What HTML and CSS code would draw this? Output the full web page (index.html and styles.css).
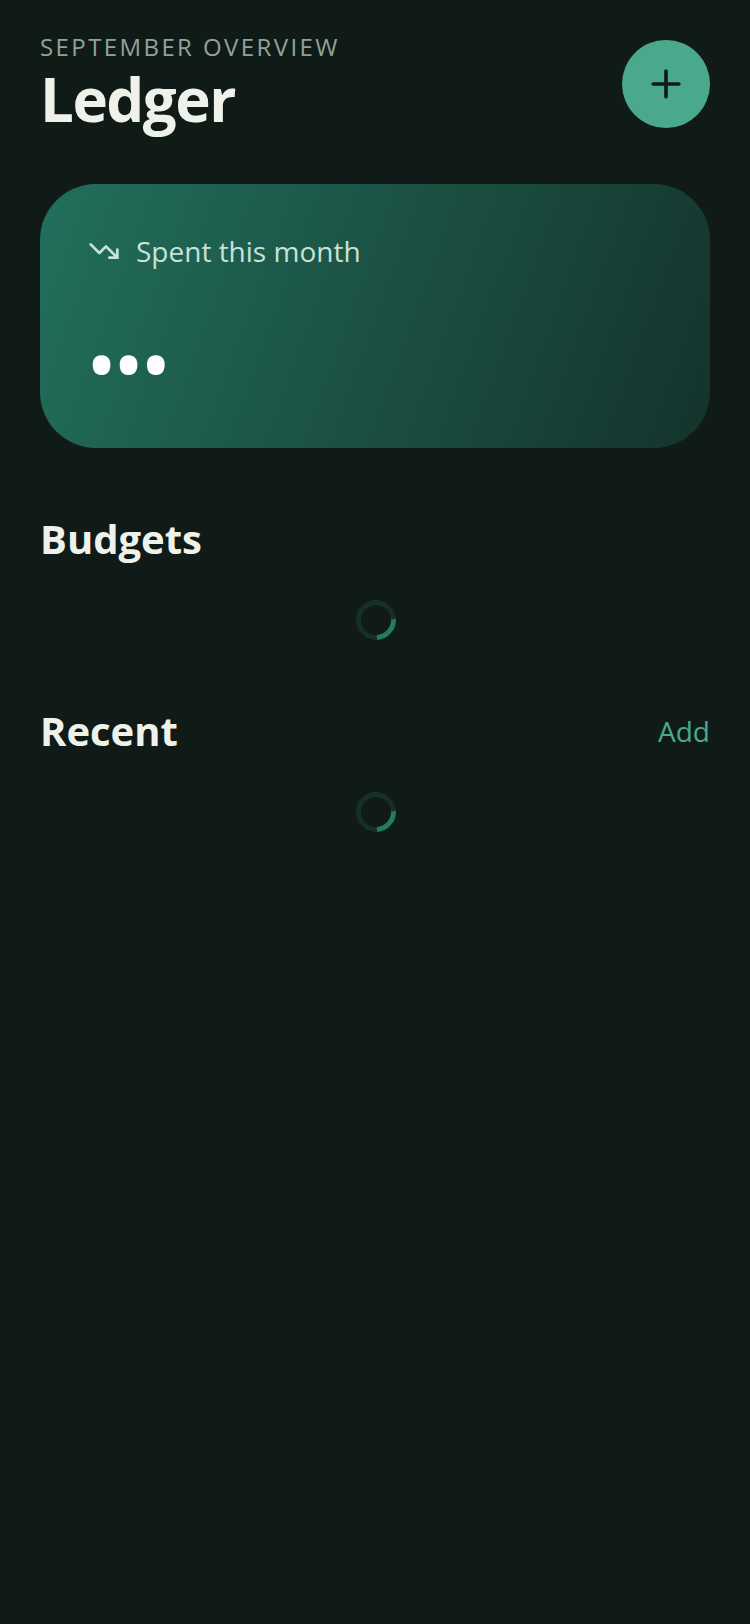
FILE: index.html
```html
<!DOCTYPE html>
<html lang="en">
<head>
<meta charset="utf-8">
<title>Ledger</title>
<link rel="stylesheet" href="styles.css">
</head>
<body>
<main class="page">
  <header class="header">
    <div class="titles">
      <div class="eyebrow">SEPTEMBER OVERVIEW</div>
      <h1 class="title">Ledger</h1>
    </div>
    <button class="fab" aria-label="Add">
      <svg class="fab-icon" viewBox="0 0 24 24" fill="none" stroke="currentColor" stroke-width="2" stroke-linecap="round" stroke-linejoin="round"><path d="M5 12h14"/><path d="M12 5v14"/></svg>
    </button>
  </header>
  <section class="card">
    <div class="card-label">
      <svg class="trend" viewBox="0 0 24 24" fill="none" stroke="currentColor" stroke-width="2" stroke-linecap="round" stroke-linejoin="round"><polyline points="22 17 13.5 8.5 8.5 13.5 2 7"/><polyline points="16 17 22 17 22 11"/></svg>
      <span>Spent this month</span>
    </div>
    <div class="dots">•••</div>
  </section>
  <section class="section budgets">
    <div class="section-head"><h2 class="section-title">Budgets</h2></div>
    <div class="loader"><div class="spinner"></div></div>
  </section>
  <section class="section recent">
    <div class="section-head"><h2 class="section-title">Recent</h2><span class="add">Add</span></div>
    <div class="loader"><div class="spinner"></div></div>
  </section>
</main>
</body>
</html>
```
FILE: styles.css
```css
* { box-sizing: border-box; }
html, body { margin: 0; padding: 0; }
body {
  width: 750px;
  height: 1624px;
  background: #101b18;
  font-family: "Open Sans", "Noto Sans", sans-serif;
  overflow: hidden;
}
.page { padding: 31px 40px 0; }
.header { display: flex; justify-content: space-between; align-items: flex-start; }
.titles { display: flex; flex-direction: column; }
.eyebrow {
  font-size: 24px;
  line-height: 32px;
  letter-spacing: 2.4px;
  color: #8fa39b;
}
.title {
  margin: 0;
  font-size: 60px;
  line-height: 73px;
  font-weight: 700;
  letter-spacing: -1.5px;
  color: #eff2ea;
}
.fab {
  width: 88px;
  height: 88px;
  margin-top: 9px;
  padding: 0;
  border: 0;
  border-radius: 50%;
  background: #4aa98c;
  color: #101b18;
  display: flex;
  align-items: center;
  justify-content: center;
}
.fab-icon { width: 44px; height: 44px; }
.card {
  margin-top: 48px;
  height: 264px;
  border-radius: 56px;
  padding: 47px 48px 0;
  background: linear-gradient(110deg, #226f5c 0%, #14332b 100%);
}
.card-label { display: flex; align-items: center; gap: 16px; color: #c9e2d8; font-size: 28px; line-height: 40px; height: 40px; }
.trend { width: 32px; height: 32px; flex: none; }
.dots { margin-top: 43px; font-size: 72px; line-height: 100px; font-weight: 570; color: #fff; }
.section-head { display: flex; justify-content: space-between; align-items: center; height: 48px; }
.section-title { margin: 0; font-size: 40px; line-height: 48px; font-weight: 700; color: #eff2ea; }
.budgets { margin-top: 67px; }
.recent { margin-top: 67px; }
.add { font-size: 28px; color: #4aa98c; }
.loader { display: flex; justify-content: center; margin-top: 37px; padding-left: 2px; }
.spinner {
  width: 40px;
  height: 40px;
  border-radius: 50%;
  border: 5.5px solid #15302a;
  border-right-color: #267a63;
  transform: rotate(42deg);
}
```
